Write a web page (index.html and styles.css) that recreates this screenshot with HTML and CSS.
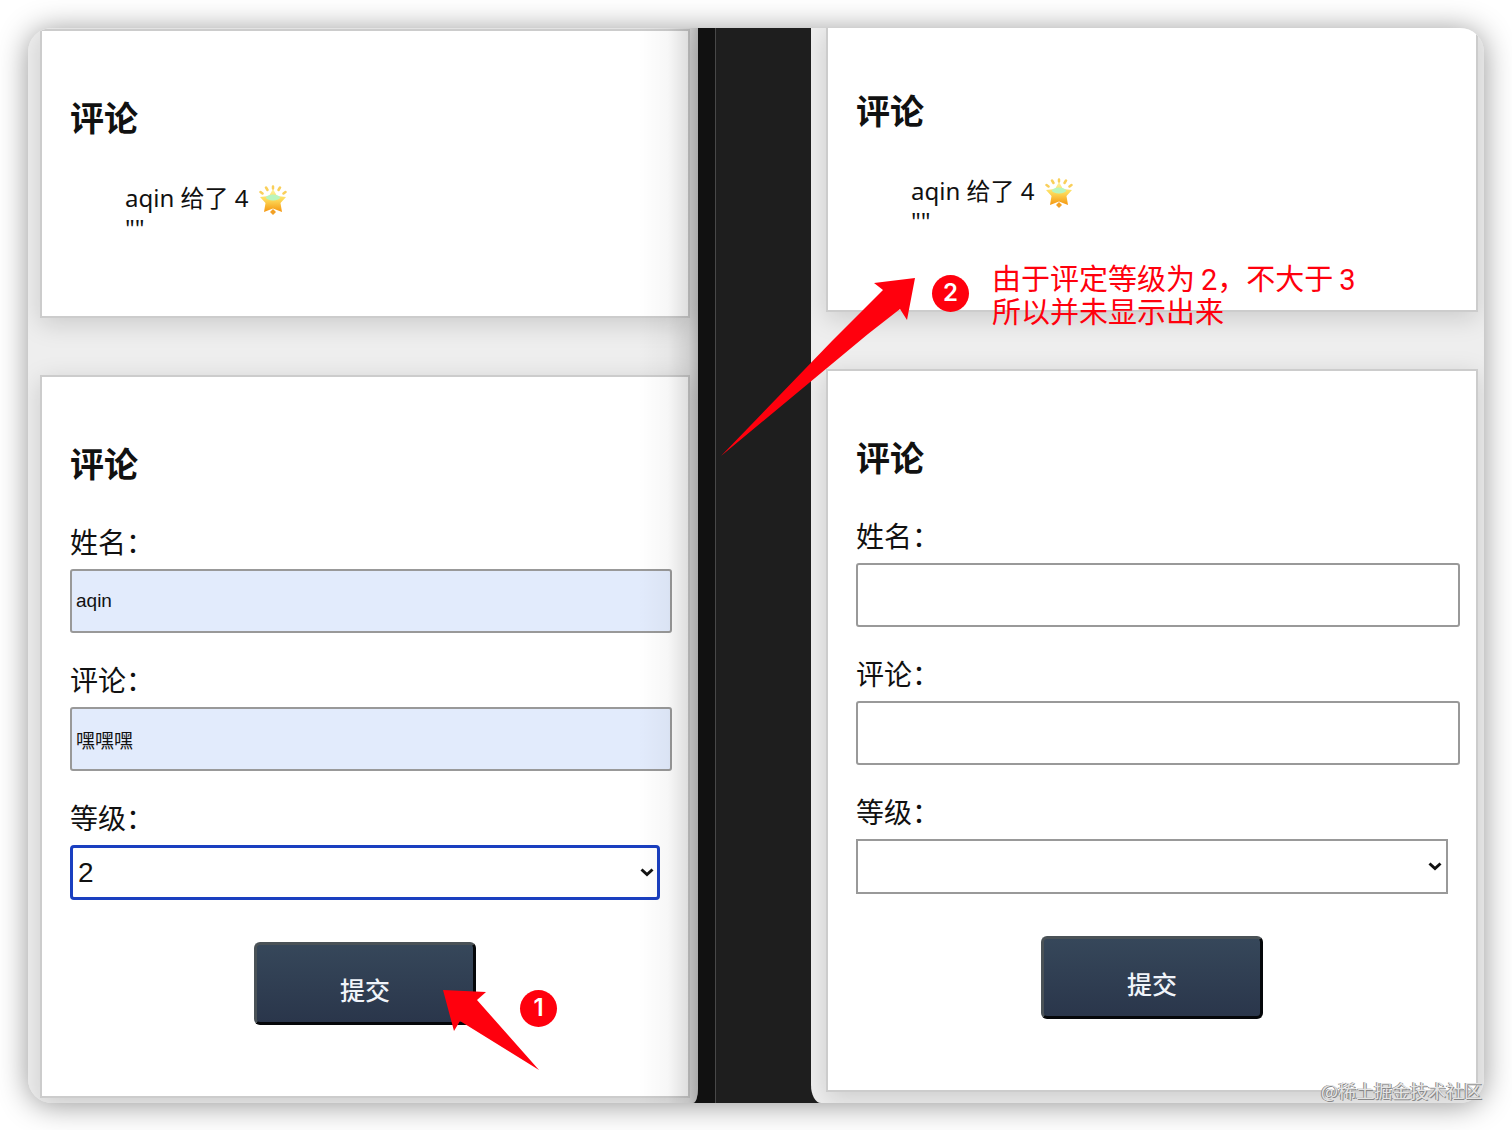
FILE: index.html
```html
<!DOCTYPE html>
<html lang="zh-CN">
<head>
    <meta charset="UTF-8">
    <meta name="viewport" content="width=device-width, initial-scale=1.0">
    <title>评论</title>
    <link rel="stylesheet" href="styles.css">
</head>
<body>
    <svg width="0" height="0" class="symbols" aria-hidden="true">
        <defs>
            <linearGradient id="gold" x1="0" y1="0" x2="0" y2="1">
                <stop offset="0" stop-color="#fff3a0"/>
                <stop offset="0.45" stop-color="#fddc5c"/>
                <stop offset="1" stop-color="#f5960f"/>
            </linearGradient>
            <symbol id="star" viewBox="0 0 28 30">
                <path d="M14 4l4 7 9 1-5.500 6 1.500 9-9-3.500-9 3.500 1.500-9L1 12l9-1z" fill="url(#gold)"/>
                <ellipse cx="14" cy="12.500" rx="7" ry="3" fill="#b9f5bd"/>
                <path d="M8.500 5L7 2.500M14 3.500V1.500M19.500 5L21 2.500M3.500 8.500L1.500 7M24.500 8.500L26.500 7" stroke="#f9cf5a" stroke-width="2.500" stroke-linecap="round"/>
                <path d="M14 24l3 3-3 3-3-3z" fill="#f2a024"/>
            </symbol>
            <symbol id="chevron" viewBox="0 0 14 9">
                <path d="M1.500 1.500L7 6.500l5.500-5" fill="none" stroke="#111" stroke-width="3"/>
            </symbol>
        </defs>
    </svg>

    <div class="frame">
        <div class="pane pane-before">
            <section class="card">
                <h3>评论</h3>
                <ul class="reviews">
                    <li>aqin 给了 4 <svg class="star"><use href="#star"/></svg><br>""</li>
                </ul>
            </section>
            <form class="card">
                <h3>评论</h3>
                <label for="name1">姓名：</label>
                <input type="text" id="name1" class="filled" value="aqin">
                <label for="review1">评论：</label>
                <input type="text" id="review1" class="filled" value="嘿嘿嘿">
                <label for="rating1">等级：</label>
                <div class="select-box">
                    <select id="rating1" class="active">
                        <option>5</option>
                        <option>4</option>
                        <option>3</option>
                        <option selected>2</option>
                        <option>1</option>
                    </select>
                    <svg class="chevron"><use href="#chevron"/></svg>
                </div>
                <button type="button">提交</button>
            </form>
        </div>

        <div class="divider"></div>

        <div class="pane pane-after">
            <section class="card">
                <h3>评论</h3>
                <ul class="reviews">
                    <li>aqin 给了 4 <svg class="star"><use href="#star"/></svg><br>""</li>
                </ul>
            </section>
            <form class="card">
                <h3>评论</h3>
                <label for="name2">姓名：</label>
                <input type="text" id="name2">
                <label for="review2">评论：</label>
                <input type="text" id="review2">
                <label for="rating2">等级：</label>
                <div class="select-box">
                    <select id="rating2">
                        <option selected></option>
                        <option>5</option>
                        <option>4</option>
                        <option>3</option>
                        <option>2</option>
                        <option>1</option>
                    </select>
                    <svg class="chevron"><use href="#chevron"/></svg>
                </div>
                <button type="button">提交</button>
            </form>
        </div>

        <!-- notes drawn over both panes -->
        <svg class="arrow arrow-submit" viewBox="0 0 97 80">
            <path d="M0 0l43 2-9 8 62 70L17 31l-6 10z" fill="#ff000d"/>
        </svg>
        <span class="badge badge-one">1</span>
        <svg class="arrow arrow-list" viewBox="0 0 194 178">
            <path d="M194 0l-8 42-7-11-32 25L0 178 111 63l51-51-9-7z" fill="#ff000d"/>
        </svg>
        <span class="badge badge-two">2</span>
        <p class="note">由于评定等级为&thinsp;2，不大于&thinsp;3<br>所以并未显示出来</p>
        <span class="watermark">@稀土掘金技术社区</span>
    </div>
</body>
</html>
```

FILE: styles.css
```css
* {
    margin: 0;
    padding: 0;
    box-sizing: border-box;
}

body {
    background: #fff;
    color: #111;
    padding: 28px;
    font-family: "Noto Sans", "Noto Sans CJK SC", sans-serif;
}

.symbols {
    position: absolute;
}

.frame {
    position: relative;
    display: grid;
    grid-template-columns: 670fr 113px 673fr;
    min-height: calc(100vh - 56px);
    background: #ebebeb;
    border-radius: 24px;
    box-shadow: 0 2px 30px rgba(0, 0, 0, 0.42);
}

.pane {
    position: relative;
    z-index: 1;
    display: flex;
    flex-direction: column;
    gap: 57px;
    background: #eee;
    overflow: hidden;
}

.pane-before {
    padding: 1px 8px 5px 12px;
    border-radius: 24px 0 5px 24px / 24px 0 14px 24px;
}

    /* shadow cast by the window on the right */
    .pane-before::after {
        content: "";
        position: absolute;
        top: 0;
        right: 0;
        bottom: 0;
        width: 60px;
        background: linear-gradient(to right, transparent, rgba(0, 0, 0, 0.03) 50%, rgba(0, 0, 0, 0.13) 84%, rgba(0, 0, 0, 0.25));
        pointer-events: none;
    }

.pane-after {
    padding: 0 6px 9px 15px;
    border-radius: 0 24px 24px 10px / 0 24px 24px 18px;
}

    .pane-after .card:first-child {
        border-top: none;
        padding: 62px 28px 72px;
    }

.divider {
    margin: 0 -12px;
    background: linear-gradient(to right, #111 29px, #484848 29px, #484848 30px, #1e1e1e 30px);
}

.card {
    display: flex;
    flex-direction: column;
    padding: 66px 28px 71px;
    background: #fff;
    border: 2px solid #ccc;
    box-shadow: 0 6px 24px rgba(0, 0, 0, 0.15);
}

h3 {
    font-family: "Noto Sans CJK SC", sans-serif;
    font-size: 34px;
    line-height: 40px;
    margin-bottom: 38px;
}

.reviews {
    list-style: none;
    margin: 8px 0 2px;
    padding-left: 55px;
    font-size: 24px;
    line-height: 30px;
}

.star {
    width: 28px;
    height: 30px;
    vertical-align: -4px;
    margin: -6px 0 -4px 4px;
}

label {
    font-family: "Noto Sans CJK SC", sans-serif;
    font-size: 28px;
    line-height: 40px;
    margin-bottom: 8px;
}

input {
    height: 64px;
    margin: 0 -12px 26px 0;
    padding: 0 4px;
    border: 2px solid #999;
    border-radius: 3px;
    background: #fff;
    color: #111;
    font-family: "Liberation Sans", "Noto Sans CJK SC", sans-serif;
    font-size: 19px;
}

    input.filled {
        background: #e2ebfc;
    }

.select-box {
    position: relative;
    margin-bottom: 42px;
}

select {
    display: block;
    width: 100%;
    height: 55px;
    padding: 0 5px;
    appearance: none;
    border: 2px solid #999;
    border-radius: 0;
    background: #fff;
    color: #111;
    font-family: "Liberation Sans", sans-serif;
    font-size: 28px;
}

    select.active {
        border: 3px solid #1a3fc0;
        border-radius: 4px;
    }

.chevron {
    position: absolute;
    right: 6px;
    top: 23px;
    width: 14px;
    height: 9px;
    pointer-events: none;
}

button {
    align-self: center;
    width: 222px;
    height: 83px;
    padding-top: 10px;
    border: 3px solid;
    border-color: #4a5257 #05070a #05070a #4a5257;
    border-radius: 6px;
    background: linear-gradient(#36475a, #2a364b);
    color: #f0f4fa;
    font-family: "Noto Sans CJK SC", sans-serif;
    font-size: 25px;
    font-weight: 500;
}

.arrow,
.badge,
.note,
.watermark {
    position: absolute;
    z-index: 2;
}

.arrow-submit {
    left: 415px;
    top: 962px;
    width: 97px;
    height: 80px;
}

.arrow-list {
    left: 693px;
    top: 250px;
    width: 194px;
    height: 178px;
}

.badge {
    width: 37px;
    height: 37px;
    border-radius: 50%;
    background: #ff000d;
    color: #fff;
    font-family: Inter, sans-serif;
    font-size: 24px;
    font-weight: 600;
    line-height: 36px;
    text-align: center;
}

.badge-one {
    left: 492px;
    top: 962px;
}

.badge-two {
    left: 904px;
    top: 247px;
}

.note {
    left: 964px;
    top: 236px;
    color: #ff000d;
    font-family: Roboto, "Noto Sans CJK SC", sans-serif;
    font-size: 29px;
    line-height: 33px;
    white-space: nowrap;
}

.watermark {
    right: 2px;
    bottom: 1px;
    color: #e4e4e4;
    font-family: "Noto Sans CJK SC", sans-serif;
    font-size: 18px;
    line-height: 24px;
    text-shadow: 1px 1px 0 #888, -1px 0 0 #888;
}
```
